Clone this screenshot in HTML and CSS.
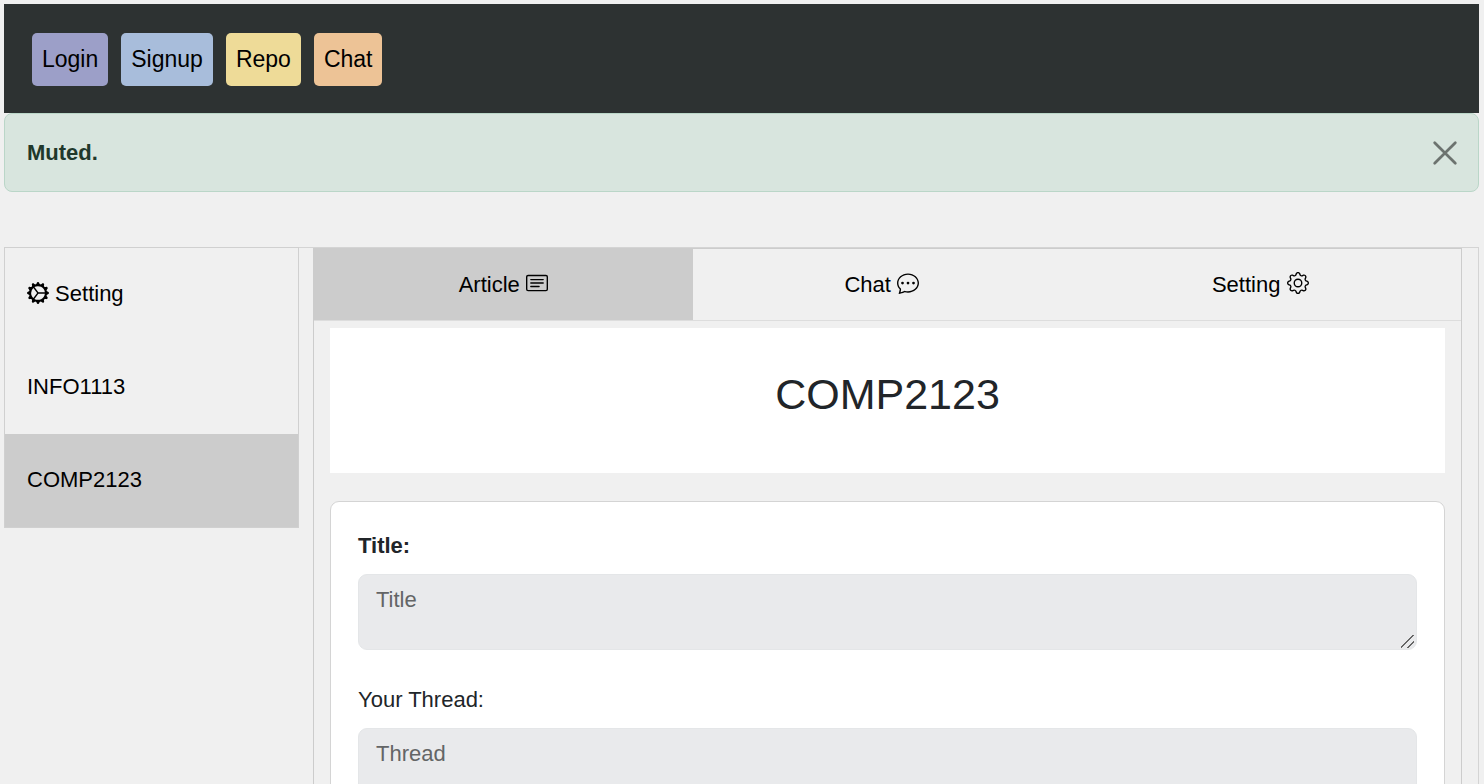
FILE: index.html
```html
<!DOCTYPE html>
<html lang="en">
<head>
<meta charset="utf-8">
<meta name="viewport" content="width=device-width, initial-scale=1">
<title>COMP2123</title>
<link rel="stylesheet" href="styles.css">
</head>
<body>
<nav class="navbar">
  <a class="nav-link login" href="#login">Login</a>
  <a class="nav-link signup" href="#signup">Signup</a>
  <a class="nav-link repo" href="#repo">Repo</a>
  <a class="nav-link chat" href="#chat">Chat</a>
</nav>
<div class="alert" role="alert">
  <strong>Muted.</strong>
  <button class="close" type="button" aria-label="Close">
    <svg class="close-icon" viewBox="0 0 16 16"><path d="M.5.500l15 15M15.500.500l-15 15"/></svg>
  </button>
</div>
<main class="layout">
  <aside class="sidebar">
    <button class="side-item" type="button">
      <svg class="icon" viewBox="0 0 16 16"><path d="M7.068.727c.243-.97 1.62-.97 1.864 0l.071.286a.96.96 0 0 0 1.622.434l.205-.211c.695-.719 1.888-.03 1.613.931l-.08.284a.96.96 0 0 0 1.187 1.187l.283-.081c.96-.275 1.65.918.931 1.613l-.211.205a.96.96 0 0 0 .434 1.622l.286.071c.97.243.97 1.62 0 1.864l-.286.071a.96.96 0 0 0-.434 1.622l.211.205c.719.695.03 1.888-.931 1.613l-.284-.08a.96.96 0 0 0-1.187 1.187l.081.283c.275.96-.918 1.65-1.613.931l-.205-.211a.96.96 0 0 0-1.622.434l-.071.286c-.243.97-1.62.97-1.864 0l-.071-.286a.96.96 0 0 0-1.622-.434l-.205.211c-.695.719-1.888.03-1.613-.931l.08-.284a.96.96 0 0 0-1.186-1.187l-.284.081c-.96.275-1.65-.918-.931-1.613l.211-.205a.96.96 0 0 0-.434-1.622l-.286-.071c-.97-.243-.97-1.62 0-1.864l.286-.071a.96.96 0 0 0 .434-1.622l-.211-.205c-.719-.695-.03-1.888.931-1.613l.284.08a.96.96 0 0 0 1.187-1.186l-.081-.284c-.275-.96.918-1.65 1.613-.931l.205.211a.96.96 0 0 0 1.622-.434zM12.973 8.5H8.25l-2.834 3.779A4.998 4.998 0 0 0 12.973 8.5m0-1a4.998 4.998 0 0 0-7.557-3.779l2.834 3.78zM5.048 3.967l-.087.065zm-.431.355A4.98 4.98 0 0 0 3.002 8c0 1.455.622 2.765 1.615 3.678L7.375 8zm.344 7.646.087.065z"/></svg>
      Setting
    </button>
    <button class="side-item" type="button">INFO1113</button>
    <button class="side-item active" type="button">COMP2123</button>
  </aside>
  <section class="content">
    <div class="panel">
      <div class="tabs">
        <button class="tab active" type="button">Article
          <svg class="icon" viewBox="0 0 16 16"><path d="M14.5 3a.5.5 0 0 1 .5.5v9a.5.5 0 0 1-.5.5h-13a.5.5 0 0 1-.5-.5v-9a.5.5 0 0 1 .5-.5zm-13-1A1.5 1.5 0 0 0 0 3.500v9A1.500 1.500 0 0 0 1.500 14h13a1.500 1.500 0 0 0 1.500-1.500v-9A1.500 1.500 0 0 0 14.500 2z"/><path d="M3 5.500a.5.5 0 0 1 .5-.5h9a.5.5 0 0 1 0 1h-9a.5.5 0 0 1-.5-.5M3 8a.5.5 0 0 1 .5-.5h9a.5.5 0 0 1 0 1h-9A.5.5 0 0 1 3 8m0 2.500a.5.5 0 0 1 .5-.5h6a.5.5 0 0 1 0 1h-6a.5.5 0 0 1-.5-.5"/></svg>
        </button>
        <button class="tab" type="button">Chat
          <svg class="icon" viewBox="0 0 16 16"><path d="M5 8a1 1 0 1 1-2 0 1 1 0 0 1 2 0m4 0a1 1 0 1 1-2 0 1 1 0 0 1 2 0m3 1a1 1 0 1 0 0-2 1 1 0 0 0 0 2"/><path d="m2.165 15.803.02-.004c1.830-.363 2.948-.842 3.468-1.105A9.060 9.060 0 0 0 8 15c4.418 0 8-3.134 8-7s-3.582-7-8-7-8 3.134-8 7c0 1.760.743 3.370 1.970 4.600a10.437 10.437 0 0 1-.524 2.318l-.003.011a10.722 10.722 0 0 1-.244.637c-.079.186.074.394.273.362a21.673 21.673 0 0 0 .693-.125zm.8-3.108a1 1 0 0 0-.287-.801C1.618 10.830 1 9.468 1 8c0-3.192 3.004-6 7-6s7 2.808 7 6c0 3.193-3.004 6-7 6a8.060 8.060 0 0 1-2.088-.272 1 1 0 0 0-.711.074c-.387.196-1.240.570-2.634.893a10.970 10.970 0 0 0 .398-2z"/></svg>
        </button>
        <button class="tab" type="button">Setting
          <svg class="icon" viewBox="0 0 16 16"><path d="M8 4.754a3.246 3.246 0 1 0 0 6.492 3.246 3.246 0 0 0 0-6.492zM5.754 8a2.246 2.246 0 1 1 4.492 0 2.246 2.246 0 0 1-4.492 0z"/><path d="M9.796 1.343c-.527-1.790-3.065-1.790-3.592 0l-.094.319a.873.873 0 0 1-1.255.520l-.292-.160c-1.640-.892-3.433.902-2.540 2.541l.159.292a.873.873 0 0 1-.520 1.255l-.319.094c-1.790.527-1.790 3.065 0 3.592l.319.094a.873.873 0 0 1 .520 1.255l-.160.292c-.892 1.640.901 3.434 2.541 2.540l.292-.159a.873.873 0 0 1 1.255.520l.094.319c.527 1.790 3.065 1.790 3.592 0l.094-.319a.873.873 0 0 1 1.255-.520l.292.160c1.640.893 3.434-.902 2.540-2.541l-.159-.292a.873.873 0 0 1 .520-1.255l.319-.094c1.790-.527 1.790-3.065 0-3.592l-.319-.094a.873.873 0 0 1-.520-1.255l.160-.292c.893-1.640-.902-3.433-2.541-2.540l-.292.159a.873.873 0 0 1-1.255-.520l-.094-.319zm-2.633.283c.246-.835 1.428-.835 1.674 0l.094.319a1.873 1.873 0 0 0 2.693 1.115l.291-.160c.764-.415 1.600.420 1.184 1.185l-.159.292a1.873 1.873 0 0 0 1.116 2.692l.318.094c.835.246.835 1.428 0 1.674l-.319.094a1.873 1.873 0 0 0-1.115 2.693l.160.291c.415.764-.420 1.600-1.185 1.184l-.291-.159a1.873 1.873 0 0 0-2.693 1.116l-.094.318c-.246.835-1.428.835-1.674 0l-.094-.319a1.873 1.873 0 0 0-2.692-1.115l-.292.160c-.764.415-1.600-.420-1.184-1.185l.159-.291A1.873 1.873 0 0 0 1.945 8.930l-.319-.094c-.835-.246-.835-1.428 0-1.674l.319-.094A1.873 1.873 0 0 0 3.060 4.377l-.160-.292c-.415-.764.420-1.600 1.185-1.184l.292.159a1.873 1.873 0 0 0 2.692-1.115l.094-.319z"/></svg>
        </button>
      </div>
      <div class="article">
        <h1 class="heading">COMP2123</h1>
        <form class="card">
          <label class="label bold" for="title">Title:</label>
          <textarea class="field" id="title" placeholder="Title"></textarea>
          <label class="label" for="thread">Your Thread:</label>
          <textarea class="field" id="thread" placeholder="Thread"></textarea>
        </form>
      </div>
    </div>
  </section>
</main>
</body>
</html>
```
FILE: styles.css
```css
* {
  box-sizing: border-box;
}

body {
  margin: 0;
  padding: 4px 5px 4px 4px;
  background: #f0f0f0;
  color: #212529;
  font-family: "Liberation Sans", Arial, sans-serif;
  font-size: 22px;
  line-height: 33px;
}

button,
textarea {
  font: inherit;
}

button {
  border: 0;
  color: #000;
  background: transparent;
  cursor: pointer;
}

.navbar {
  display: flex;
  gap: 13px;
  padding: 29px 28px 27px;
  background: #2d3232;
}

.nav-link {
  padding: 9px 10px;
  border-radius: 5px;
  color: #000;
  font-size: 23px;
  line-height: 35px;
  text-decoration: none;
}

.login { background: #9c9fc8; }
.signup { background: #a8bddb; }
.repo { background: #eedb98; }
.chat { background: #edc396; }

.alert {
  display: flex;
  align-items: center;
  justify-content: space-between;
  padding: 22px;
  border: 1px solid #bad6c8;
  border-radius: 8px;
  background: #d8e5de;
  color: #21382b;
}

.close {
  display: flex;
  padding: 0;
}

.close-icon {
  width: 22px;
  height: 22px;
  overflow: visible;
  fill: none;
  stroke: #6c736f;
  stroke-width: 2;
  stroke-linecap: round;
}

.icon {
  width: 22px;
  height: 22px;
  fill: currentColor;
  vertical-align: -3px;
}

.layout {
  display: flex;
  align-items: flex-start;
  margin-top: 55px;
}

.sidebar {
  display: flex;
  flex-direction: column;
  width: 20%;
  border: 1px solid #d0d0d0;
}

.side-item {
  padding: 29px 22px 31px;
  text-align: left;
}

.active {
  background: #ccc;
}

.content {
  flex: 1;
  padding: 0 16px 0 14px;
  border: solid #d4d4d4;
  border-width: 1px 1px 0 0;
}

.panel {
  border: 1px solid #ccc;
  border-bottom: 0;
}

.tabs {
  display: flex;
  border-bottom: 1px solid #ddd;
}

.tab {
  width: 33%;
  padding: 19px 16px;
}

.tab .icon {
  vertical-align: -2px;
}

.article {
  padding: 7px 16px 16px;
}

.heading {
  margin: 0 0 28px;
  padding: 39px 16px 52px;
  background: #fff;
  font-size: 43px;
  font-weight: 400;
  line-height: 54px;
  text-align: center;
}

.card {
  padding: 27px;
  border: 1px solid #d4d4d4;
  border-radius: 9px;
  background: #fff;
}

.label {
  display: block;
  margin-bottom: 12px;
}

.bold {
  font-weight: 700;
}

.field {
  display: block;
  width: 100%;
  height: 76px;
  margin-bottom: 33px;
  padding: 8px 17px;
  border: 1px solid #e4e6e8;
  border-radius: 9px;
  background: #e9eaec;
  color: #212529;
  resize: vertical;
}

.field::placeholder {
  color: #636566;
}

.field::-webkit-scrollbar {
  width: 15px;
  height: 15px;
}

.field::-webkit-resizer {
  background: linear-gradient(135deg, transparent 46%, #666 46%, #666 53%, transparent 53%, transparent 73%, #666 73%, #666 80%, transparent 80%) 0 1px / 13px 13px no-repeat;
}
```
